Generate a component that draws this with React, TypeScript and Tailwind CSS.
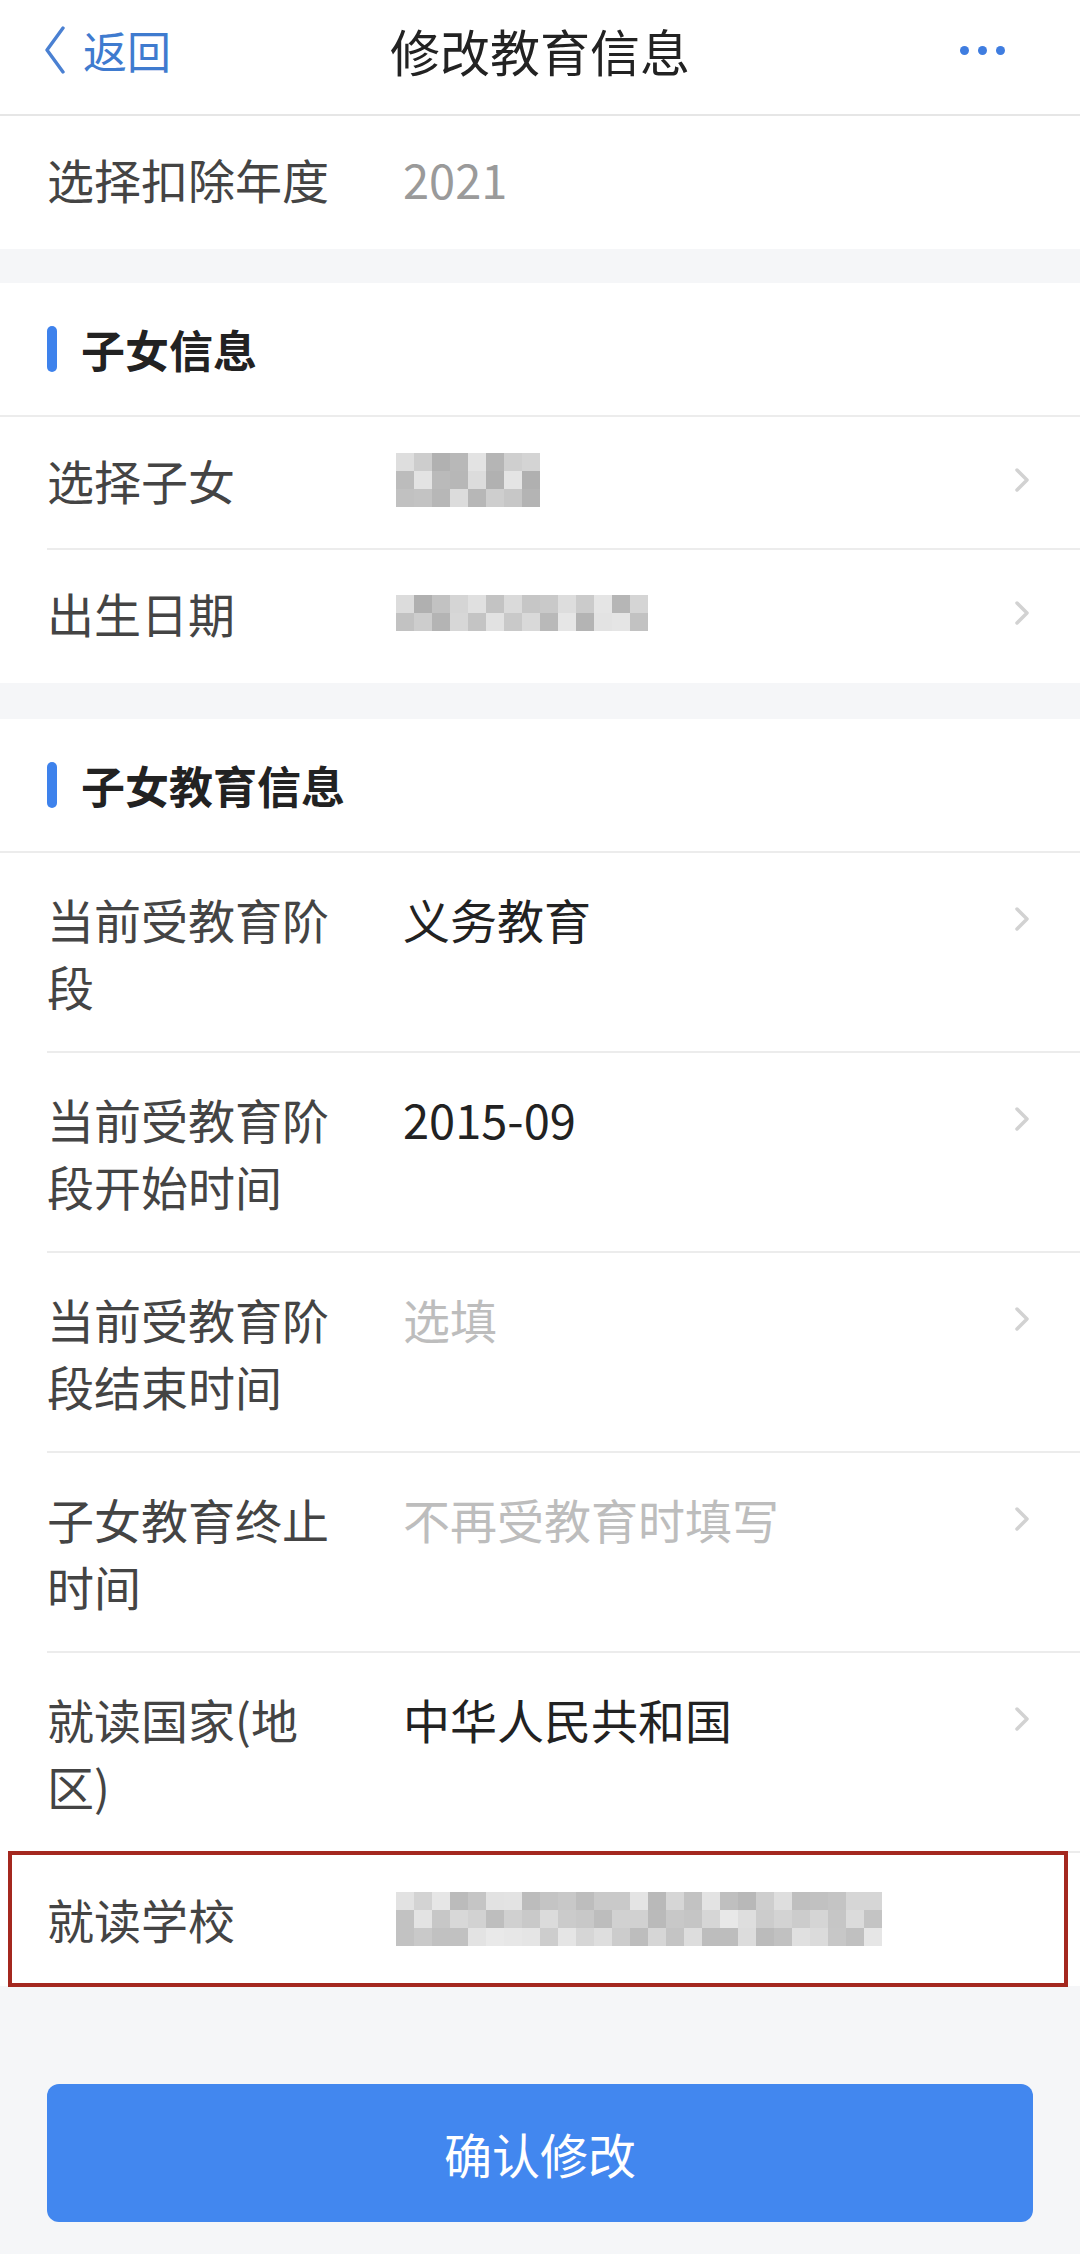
import React from "react";

function shade(seed: number, r: number, c: number, min: number, max: number) {
  const x = Math.sin(seed * 97.13 + r * 12.9898 + c * 78.233) * 43758.5453;
  const f = x - Math.floor(x);
  const v = Math.round(min + f * (max - min));
  const h = v.toString(16).padStart(2, "0");
  return `#${h}${h}${h}`;
}

function Mosaic({ cols, rows, cell, seed, min = 0xb0, max = 0xe6 }: { cols: number; rows: number; cell: number; seed: number; min?: number; max?: number }) {
  const rects: React.ReactNode[] = [];
  for (let r = 0; r < rows; r++) {
    for (let c = 0; c < cols; c++) {
      rects.push(
        <rect key={`${r}-${c}`} x={c * cell} y={r * cell} width={cell + 0.5} height={cell + 0.5} fill={shade(seed, r, c, min, max)} />
      );
    }
  }
  return (
    <svg width={cols * cell} height={rows * cell} viewBox={`0 0 ${cols * cell} ${rows * cell}`} className="block">
      {rects}
    </svg>
  );
}

function Chevron() {
  return (
    <div className="h-[67px] w-[16px] shrink-0 ml-auto flex items-center">
      <svg width="16" height="24" viewBox="0 0 16 24">
        <polyline points="3,2 13,12 3,22" fill="none" stroke="#d2d2d2" strokeWidth="3.5" strokeLinecap="round" strokeLinejoin="round" />
      </svg>
    </div>
  );
}

function Row({ label, children, last, chevron = true, overlay, tight }: { label: string; children?: React.ReactNode; last?: boolean; chevron?: boolean; overlay?: boolean; tight?: boolean }) {
  return (
    <div className="relative pl-[47px] bg-white">
      <div className={`flex items-start ${tight ? "pt-[29px] pb-[35px]" : "py-[32px]"} pr-[50px] border-b-2 ${last ? "border-transparent" : "border-[#ececec]"}`}>
        <div className="w-[296px] mr-[60px] shrink-0 text-[47px] leading-[67px] text-[#444]">{label}</div>
        <div className="flex-1 min-h-[67px] text-[47px] leading-[67px] text-[#222] flex items-start">{children}</div>
        {chevron && <Chevron />}
      </div>
      {overlay && (
        <div className="absolute left-[8px] right-[12px] -top-[2px] -bottom-[1px] border-4 border-[#a4281f] pointer-events-none" />
      )}
    </div>
  );
}

function SectionHeader({ title }: { title: string }) {
  return (
    <div className="h-[134px] bg-white border-b-2 border-[#ececec] flex items-center pl-[47px]">
      <div className="w-[10px] h-[46px] rounded-full bg-[#3e82ec]" />
      <div className="ml-[24px] text-[44px] font-bold text-[#222] leading-none">{title}</div>
    </div>
  );
}

export default function App() {
  return (
    <div className="w-[1080px] min-h-[2254px] bg-[#f5f6f8] font-['Noto_Sans_CJK_SC','Noto_Sans',sans-serif]">
      {/* Header */}
      <div className="h-[116px] pb-[14px] bg-white border-b-2 border-[#e6e6e6] grid grid-cols-[1fr_auto_1fr] items-center">
        <div className="flex items-center pl-[45px]">
          <svg width="20" height="48" viewBox="0 0 20 48">
            <polyline points="18,2 2,24 18,46" fill="none" stroke="#4a80d2" strokeWidth="3.4" strokeLinecap="round" strokeLinejoin="round" />
          </svg>
          <span className="ml-[18px] text-[44px] leading-none text-[#3f7bcf]">返回</span>
        </div>
        <div className="text-[50px] leading-none text-[#222]">修改教育信息</div>
        <div className="flex justify-end items-center gap-[9px] pr-[75px]">
          <div className="w-[9px] h-[9px] rounded-full bg-[#3f7de0]" />
          <div className="w-[9px] h-[9px] rounded-full bg-[#3f7de0]" />
          <div className="w-[9px] h-[9px] rounded-full bg-[#3f7de0]" />
        </div>
      </div>

      {/* Year */}
      <Row label="选择扣除年度" chevron={false} last tight>
        <span className="text-[#9a9a9a]">2021</span>
      </Row>

      <div className="h-[34px]" />

      {/* 子女信息 */}
      <SectionHeader title="子女信息" />
      <Row label="选择子女" tight>
        <div className="h-[67px] flex items-center -ml-[7px]">
          <Mosaic cols={8} rows={3} cell={18} seed={3} />
        </div>
      </Row>
      <Row label="出生日期" last tight>
        <div className="h-[67px] flex items-center -ml-[7px]">
          <Mosaic cols={14} rows={2} cell={18} seed={7} />
        </div>
      </Row>

      <div className="h-[36px]" />

      {/* 子女教育信息 */}
      <SectionHeader title="子女教育信息" />
      <Row label="当前受教育阶段">义务教育</Row>
      <Row label="当前受教育阶段开始时间">2015-09</Row>
      <Row label="当前受教育阶段结束时间">
        <span className="text-[#bdbdbd]">选填</span>
      </Row>
      <Row label="子女教育终止时间">
        <span className="text-[#bdbdbd]">不再受教育时填写</span>
      </Row>
      <Row label="就读国家(地区)">中华人民共和国</Row>
      <Row label="就读学校" chevron={false} last overlay>
        <div className="h-[67px] flex items-center -ml-[7px]">
          <Mosaic cols={27} rows={3} cell={18} seed={11} min={0xb8} max={0xea} />
        </div>
      </Row>

      {/* Button */}
      <div className="px-[47px] pt-[98px] pb-[31px]">
        <div className="h-[138px] rounded-[12px] bg-[#4287ef] flex items-center justify-center text-[48px] text-white">
          确认修改
        </div>
      </div>
    </div>
  );
}
